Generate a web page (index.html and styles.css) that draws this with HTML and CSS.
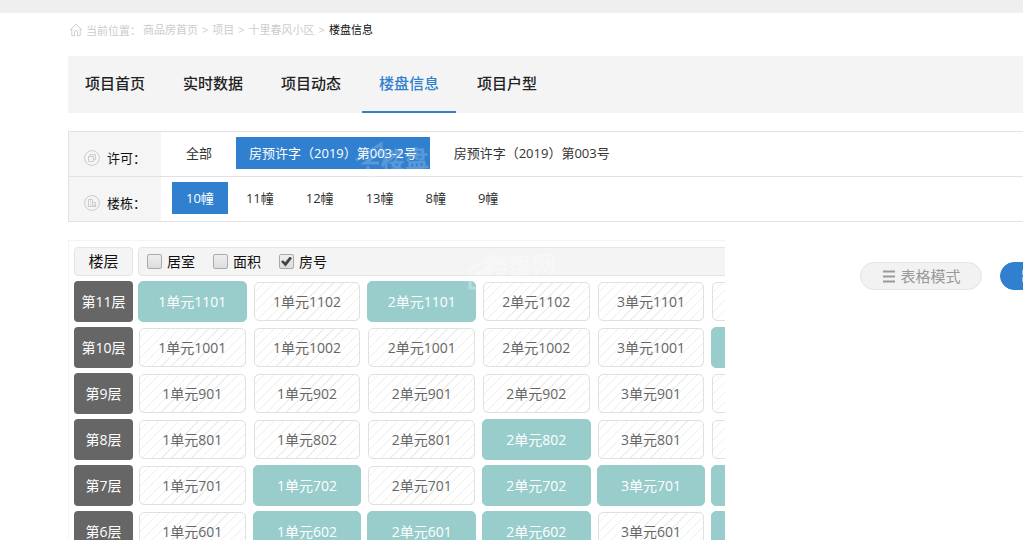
FILE: index.html
```html
<!DOCTYPE html>
<html lang="zh-CN">
<head>
<meta charset="utf-8">
<title>楼盘信息</title>
<link rel="stylesheet" href="styles.css">
</head>
<body>
<div class="topbar"></div>
<div class="page">
  <nav class="crumbs" aria-label="当前位置">
    <svg class="crumb-home" viewBox="0 0 14 14" aria-hidden="true"><path d="M1 7.2 7 1.2l6 6M2.8 6v6.7h2.7V9.2c0-1 .6-1.6 1.5-1.6s1.5.6 1.5 1.6v3.5h2.7V6"/></svg>
    <span class="crumb-label">当前位置<span class="colon">：</span></span>
    <a href="#">商品房首页</a><span class="sep">&gt;</span><a href="#">项目</a><span class="sep">&gt;</span><a href="#">十里春风小区</a><span class="sep">&gt;</span><span class="here">楼盘信息</span>
  </nav>

  <nav class="tabs">
    <a href="#" class="tab">项目首页</a>
    <a href="#" class="tab">实时数据</a>
    <a href="#" class="tab">项目动态</a>
    <a href="#" class="tab active">楼盘信息</a>
    <a href="#" class="tab">项目户型</a>
  </nav>

  <section class="filters">
    <div class="filter">
      <div class="filter-name">
        <svg class="filter-icon" viewBox="0 0 16 16" aria-hidden="true"><circle cx="8" cy="8" r="7.4"/><path d="M4.5 6.5h5v5h-5zM6 6.3V4.7h5.4v5.1H9.7"/></svg>
        <span>许可<span class="colon">：</span></span>
      </div>
      <div class="options wide">
        <a href="#" class="option">全部</a>
        <a href="#" class="option chosen">房预许字（2019）第003-2号</a>
        <a href="#" class="option">房预许字（2019）第003号</a>
      </div>
    </div>
    <div class="filter">
      <div class="filter-name">
        <svg class="filter-icon" viewBox="0 0 16 16" aria-hidden="true"><circle cx="8" cy="8" r="7.4"/><path d="M4.5 11.5v-7h4v7M8.5 7.5h3v4M3.7 11.5h8.6M6 6h1M6 8h1M6 10h1M10 9v2.5"/></svg>
        <span>楼栋<span class="colon">：</span></span>
      </div>
      <div class="options">
        <a href="#" class="option chosen">10幢</a>
        <a href="#" class="option">11幢</a>
        <a href="#" class="option">12幢</a>
        <a href="#" class="option">13幢</a>
        <a href="#" class="option">8幢</a>
        <a href="#" class="option">9幢</a>
      </div>
    </div>
    <svg class="watermark mark-top" viewBox="0 0 110 44" aria-hidden="true"><path d="M3 22 28 6v8L12 25h14M15 28v10h9"/><text x="28" y="32" transform="rotate(-4 28 32)">楼盘网</text></svg>
  </section>

  <div class="content">
    <section class="board">
      <div class="row head">
        <div class="floor-title">楼层</div>
        <div class="toggles">
          <label><input type="checkbox">居室</label>
          <label><input type="checkbox">面积</label>
          <label><input type="checkbox" checked>房号</label>
        </div>
      </div>
      <div class="row"><div class="floor">第11层</div><div class="rooms"><a href="#" class="room sold">1单元1101</a><a href="#" class="room">1单元1102</a><a href="#" class="room sold">2单元1101</a><a href="#" class="room">2单元1102</a><a href="#" class="room">3单元1101</a><a href="#" class="room" aria-label="3单元1102"></a></div></div>
      <div class="row"><div class="floor">第10层</div><div class="rooms"><a href="#" class="room">1单元1001</a><a href="#" class="room">1单元1002</a><a href="#" class="room">2单元1001</a><a href="#" class="room">2单元1002</a><a href="#" class="room">3单元1001</a><a href="#" class="room sold" aria-label="3单元1002"></a></div></div>
      <div class="row"><div class="floor">第9层</div><div class="rooms"><a href="#" class="room">1单元901</a><a href="#" class="room">1单元902</a><a href="#" class="room">2单元901</a><a href="#" class="room">2单元902</a><a href="#" class="room">3单元901</a><a href="#" class="room" aria-label="3单元902"></a></div></div>
      <div class="row"><div class="floor">第8层</div><div class="rooms"><a href="#" class="room">1单元801</a><a href="#" class="room">1单元802</a><a href="#" class="room">2单元801</a><a href="#" class="room sold">2单元802</a><a href="#" class="room">3单元801</a><a href="#" class="room" aria-label="3单元802"></a></div></div>
      <div class="row"><div class="floor">第7层</div><div class="rooms"><a href="#" class="room">1单元701</a><a href="#" class="room sold">1单元702</a><a href="#" class="room">2单元701</a><a href="#" class="room sold">2单元702</a><a href="#" class="room sold">3单元701</a><a href="#" class="room sold" aria-label="3单元702"></a></div></div>
      <div class="row"><div class="floor">第6层</div><div class="rooms"><a href="#" class="room">1单元601</a><a href="#" class="room sold">1单元602</a><a href="#" class="room sold">2单元601</a><a href="#" class="room sold">2单元602</a><a href="#" class="room">3单元601</a><a href="#" class="room sold" aria-label="3单元602"></a></div></div>
      <svg class="watermark mark-board" viewBox="0 0 110 44" aria-hidden="true"><path d="M3 22 28 6v8L12 25h14M5 24v15h9"/><text x="20" y="28" transform="rotate(-4 20 28)">楼盘网</text></svg>
    </section>
    <div class="modes">
      <button type="button" class="mode"><svg class="mode-icon" viewBox="0 0 14 14" aria-hidden="true"><path d="M1 2.5h12M1 7.5h12M1 12.5h12"/></svg>表格模式</button>
      <button type="button" class="mode on" aria-label="图形模式"><svg class="mode-icon" viewBox="0 0 14 14" aria-hidden="true"><path d="M1 1h5v5H1zM8 1h5v5H8zM1 8h5v5H1zM8 8h5v5H8z"/></svg></button>
    </div>
  </div>
</div>
</body>
</html>
```
FILE: styles.css
```css
* { box-sizing: border-box; }
html, body { height: 100%; }
body {
  margin: 0;
  overflow: hidden;
  background: #fff;
  color: #222;
  font: 13px/20px "Open Sans", "Noto Sans CJK SC", sans-serif;
}
a { color: inherit; text-decoration: none; }
svg { fill: none; flex: none; }

.topbar { height: 13px; background: #efefef; }
.page { padding-left: 68px; }
.colon { font-family: "Noto Sans CJK TC", sans-serif; }

.crumbs {
  display: flex;
  align-items: center;
  height: 34px;
  padding-left: 1px;
  font-size: 11px;
  color: #ccc;
  white-space: nowrap;
}
.crumb-home { width: 14px; height: 14px; margin-right: 3px; stroke: #ccc; }
.crumb-label { margin-right: 2px; }
.sep { padding: 0 4px; }
.here { color: #111; }

.tabs {
  display: flex;
  gap: 4px;
  margin-top: 9px;
  background: #f4f4f4;
}
.tab {
  height: 57px;
  padding: 0 17px;
  border-bottom: 2px solid transparent;
  font-size: 15px;
  font-weight: 500;
  line-height: 55px;
  white-space: nowrap;
}
.tab.active { color: #3080cf; border-color: #3080cf; }

.filters {
  position: relative;
  margin-top: 18px;
  border: 1px solid #e2e2e2;
  border-right: 0;
}
.filter { display: flex; height: 44px; }
.filter + .filter { height: 45px; border-top: 1px solid #e2e2e2; }
.filter-name {
  display: flex;
  align-items: center;
  gap: 7px;
  width: 92px;
  padding: 7px 0 0 15px;
  background: #f5f5f5;
  color: #111;
}
.filter-icon { width: 16px; height: 16px; stroke: #ccc; }
.options {
  display: flex;
  gap: 4px;
  padding: 5px 0 0 11px;
  white-space: nowrap;
}
.options.wide { gap: 11px; padding-left: 12px; }
.option {
  height: 32px;
  padding: 0 14px;
  line-height: 32px;
  color: #333;
}
.wide .option { padding: 0 13px; }
.option.chosen { background: #3080cf; color: #fff; }

.watermark { position: absolute; width: 110px; height: 44px; pointer-events: none; }
.watermark path { stroke: #fff; stroke-width: 3; }
.watermark text { fill: #fff; font-size: 24px; font-weight: 700; }
.mark-top { left: 284px; top: 6px; opacity: .2; }
.mark-board { left: 396px; top: 8px; opacity: .3; }

.content { display: flex; margin-top: 18px; }
.board {
  position: relative;
  flex: 0 0 657px;
  display: flex;
  flex-direction: column;
  gap: 5px;
  padding: 6px 0 0 5px;
  overflow: hidden;
  border: 1px solid #f4f4f4;
  border-right: 0;
  font-size: 14px;
}
.row { display: flex; gap: 5px; }
.row.head { height: 29px; }
.floor-title, .floor { flex: 0 0 59px; border-radius: 4px; text-align: center; }
.floor-title {
  background: #f4f4f4;
  border: 1px solid #e4e4e4;
  font-size: 15px;
  line-height: 27px;
  color: #111;
}
.toggles {
  flex: none;
  display: flex;
  gap: 18px;
  width: 682px;
  padding-left: 8px;
  background: #f4f4f4;
  border: 1px solid #e4e4e4;
  border-radius: 4px;
  color: #111;
}
.toggles label { display: flex; align-items: center; gap: 5px; }
.toggles input {
  appearance: none;
  width: 15px;
  height: 15px;
  margin: 0;
  border: 1px solid #aaa;
  border-radius: 2px;
  background: linear-gradient(#eee, #ddd);
}
.toggles input:checked {
  display: grid;
  place-items: center;
}
.toggles input:checked::before {
  content: "";
  width: 11px;
  height: 10px;
  background: #444;
  clip-path: polygon(0 52%, 18% 38%, 38% 58%, 80% 0, 100% 18%, 42% 100%);
}
.floor { height: 41px; background: #666; color: #fff; line-height: 41px; }
.rooms {
  flex: none;
  display: grid;
  grid-template-columns: repeat(6, 1fr);
  gap: 6px;
  width: 682px;
}
.room {
  height: 39px;
  margin: 1px;
  border: 1px solid #e0e0e0;
  border-radius: 5px;
  background: repeating-linear-gradient(135deg, #fff 0 6px, #eee 6px 7px);
  color: #666;
  line-height: 37px;
  text-align: center;
}
.room.sold {
  height: 41px;
  margin: 0;
  border-color: #98cdcc;
  background: #98cdcc;
  color: #fff;
  line-height: 39px;
}

.modes { display: flex; gap: 18px; padding: 22px 0 0 135px; }
.mode {
  flex: none;
  display: flex;
  align-items: center;
  justify-content: center;
  gap: 4px;
  width: 122px;
  height: 28px;
  padding: 0 0 0 1px;
  border: 1px solid #e4e4e4;
  border-radius: 14px;
  background: #f2f2f2;
  color: #999;
  font: inherit;
  font-size: 15px;
}
.mode-icon { width: 14px; height: 14px; stroke: #999; stroke-width: 2; }
.mode.on { justify-content: flex-start; padding-left: 21px; background: #3080cf; border-color: #3080cf; color: #fff; }
.mode.on .mode-icon { stroke: #fff; stroke-width: 1; }
```
